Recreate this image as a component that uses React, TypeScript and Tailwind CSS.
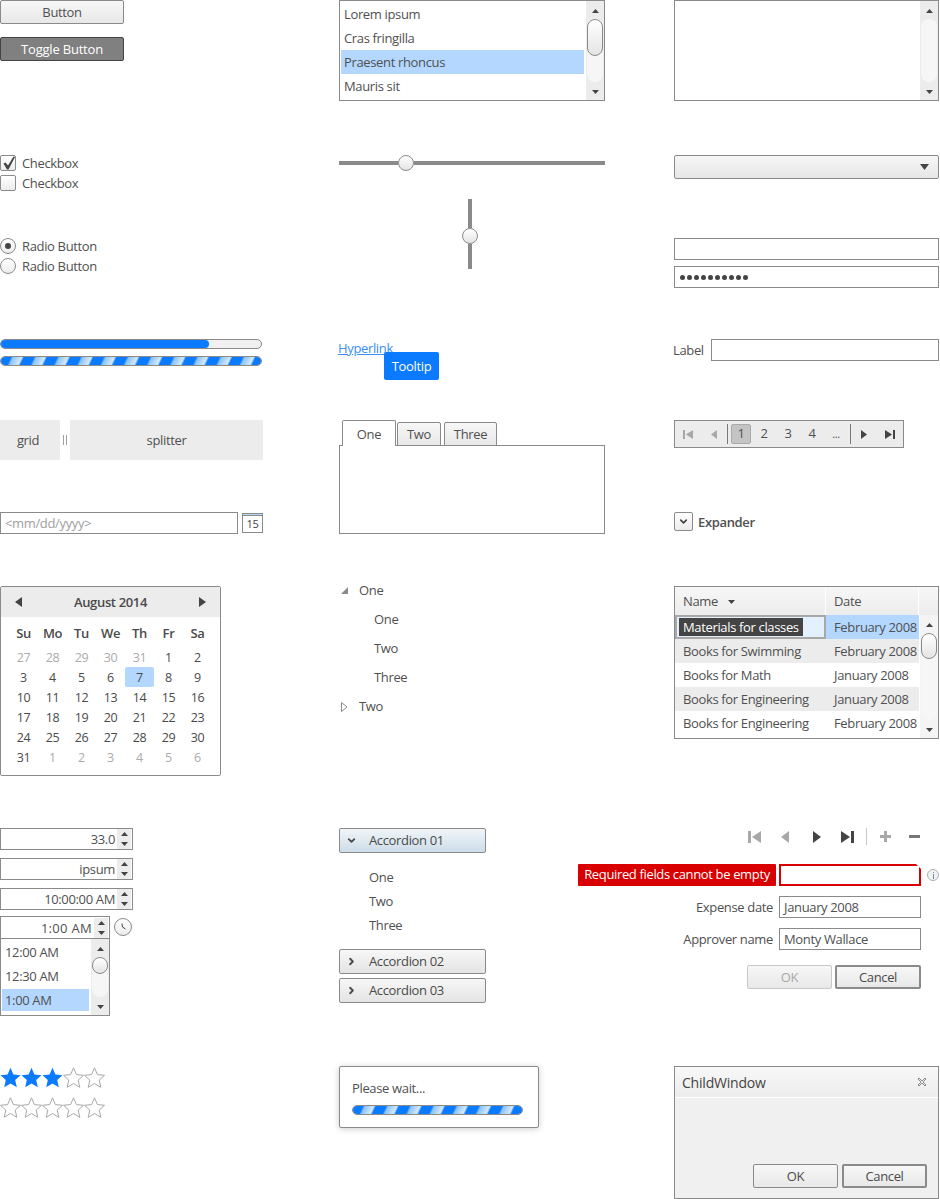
import { ChevronDown, ChevronRight } from "lucide-react";

const stripes =
  "bg-[repeating-linear-gradient(115deg,#0a7aff_0px,#0a7aff_9px,#8cc4fc_11px,#d5e9fd_19px,#0a7aff_21px)] bg-clip-padding";

function Tri({ dir, w = 8, h = 5, className = "fill-[#444]" }: { dir: "up" | "down" | "left" | "right"; w?: number; h?: number; className?: string }) {
  const pts = {
    up: `0,${h} ${w},${h} ${w / 2},0`,
    down: `0,0 ${w},0 ${w / 2},${h}`,
    left: `${w},0 ${w},${h} 0,${h / 2}`,
    right: `0,0 0,${h} ${w},${h / 2}`,
  }[dir];
  return (
    <svg width={w} height={h} viewBox={`0 0 ${w} ${h}`} className={`block shrink-0 ${className}`}>
      <polygon points={pts} />
    </svg>
  );
}

function Thumb({ className = "" }: { className?: string }) {
  return (
    <div className={`rounded-full border border-[#8a8a8a] bg-gradient-to-b from-white to-[#e4e4e4] ${className}`} />
  );
}

function ScrollBar({ thumb = "h-[37px]", className = "" }: { thumb?: string; className?: string }) {
  return (
    <div className={`flex w-[18px] shrink-0 flex-col items-center bg-[#ececec] ${className}`}>
      <div className="flex h-[18px] items-center justify-center pt-[2px]">
        <Tri dir="up" w={7} h={4} />
      </div>
      <div className="w-[16px] flex-1 rounded-[8px] bg-[#f6f6f6]">
        {thumb && <Thumb className={`w-[16px] rounded-[8px] ${thumb}`} />}
      </div>
      <div className="flex h-[18px] items-center justify-center pt-[2px]">
        <Tri dir="down" w={7} h={4} />
      </div>
    </div>
  );
}

function Btn({ label, className = "" }: { label: string; className?: string }) {
  return (
    <div className={`flex h-[24px] items-center justify-center rounded-[2px] border border-[#8a8a8a] bg-gradient-to-b from-[#f7f7f7] to-[#e8e8e8] pt-[2px] ${className}`}>
      {label}
    </div>
  );
}

function Check({ checked, className = "" }: { checked?: boolean; className?: string }) {
  return (
    <div className={`flex h-[20px] items-center gap-[6px] text-[#505050] ${className}`}>
      <div className="relative h-[16px] w-[16px] rounded-[2px] border border-[#8a8a8a] bg-gradient-to-b from-white to-[#ececec]">
        {checked && (
          <svg width="14" height="14" viewBox="0 0 14 14" className="absolute left-[1px] top-0 fill-[#444]">
            <path d="M1.5 7.5 L3.5 6.5 L6 9.5 L11.5 0.5 L13 1 L6.5 13.5 L5 13.5 Z" />
          </svg>
        )}
      </div>
      <span className="mt-[2px]">Checkbox</span>
    </div>
  );
}

function Radio({ checked, className = "" }: { checked?: boolean; className?: string }) {
  return (
    <div className={`flex h-[20px] items-center gap-[6px] text-[#505050] ${className}`}>
      <div className="flex h-[16px] w-[16px] items-center justify-center rounded-full border border-[#8a8a8a] bg-gradient-to-b from-white to-[#ececec]">
        {checked && <div className="h-[6px] w-[6px] rounded-full bg-[#444]" />}
      </div>
      <span className="mt-[2px]">Radio Button</span>
    </div>
  );
}

function Striped({ className = "" }: { className?: string }) {
  return <div className={`h-[10px] rounded-[5px] border border-[#8a8a8a] ${stripes} ${className}`} />;
}

function Spin() {
  return (
    <div className="mr-[1px] flex h-[20px] w-[14px] shrink-0 flex-col bg-[#ececec]">
      <div className="flex h-[10px] items-center justify-center"><Tri dir="up" w={7} h={4} /></div>
      <div className="flex h-[10px] items-center justify-center"><Tri dir="down" w={7} h={4} /></div>
    </div>
  );
}

function Numeric({ value, className = "" }: { value: string; className?: string }) {
  return (
    <div className={`flex h-[22px] w-[133px] items-center justify-end gap-[2px] border border-[#8a8a8a] text-[#505050] ${className}`}>
      <span className="mt-[2px]">{value}</span>
      <Spin />
    </div>
  );
}

function Star({ on }: { on?: boolean }) {
  return (
    <svg width="21" height="21" viewBox="0 0 21 21" className={on ? "fill-[#0a7aff]" : "fill-white stroke-[#a8a8a8]"}>
      <polygon points="10.5,0.8 13.4,7.6 20.5,8.3 15.2,13.1 16.8,20.3 10.5,16.5 4.2,20.3 5.8,13.1 0.5,8.3 7.6,7.6" />
    </svg>
  );
}

function Calendar() {
  const head = ["Su", "Mo", "Tu", "We", "Th", "Fr", "Sa"];
  const prev = ["27", "28", "29", "30", "31"];
  const days = Array.from({ length: 31 }, (_, i) => String(i + 1));
  const next = ["1", "2", "3", "4", "5", "6"];
  return (
    <div className="mt-[52px] h-[190px] w-[221px] rounded-[2px] border border-[#8a8a8a]">
      <div className="flex h-[30px] items-center justify-between bg-[#ececec] px-[14px] font-semibold text-[#4a4a4a]">
        <Tri dir="left" w={7} h={10} />
        <span className="mt-[2px]">August 2014</span>
        <Tri dir="right" w={7} h={10} />
      </div>
      <div className="grid grid-cols-[repeat(7,29px)] pl-[8px] pt-[7px]">
        {head.map((d) => (
          <div key={d} className="flex h-[20px] items-center justify-center font-semibold text-[#4a4a4a]">{d}</div>
        ))}
      </div>
      <div className="grid grid-cols-[repeat(7,29px)] grid-rows-[repeat(6,20px)] pl-[8px] pt-[3px] text-[12.5px]">
        {prev.map((d) => (
          <div key={"p" + d} className="flex items-center justify-center pt-[2px] text-[#ababab]">{d}</div>
        ))}
        {days.map((d) => (
          <div key={d} className={`flex items-center justify-center pt-[2px] text-[#4a4a4a] ${d === "7" ? "rounded-[2px] bg-[#b3d7ff]" : ""}`}>{d}</div>
        ))}
        {next.map((d) => (
          <div key={"n" + d} className="flex items-center justify-center pt-[2px] text-[#ababab]">{d}</div>
        ))}
      </div>
    </div>
  );
}

function ColumnOne() {
  return (
    <div className="w-[263px] shrink-0">
      <Btn label="Button" className="w-[124px] text-[#505050]" />
      <div className="mt-[13px] flex h-[24px] w-[124px] items-center justify-center rounded-[2px] border border-[#444] bg-[#808080] pt-[2px] tracking-[-0.2px] text-white">
        Toggle Button
      </div>
      <Check checked className="mt-[92px]" />
      <Check />
      <Radio checked className="mt-[43px]" />
      <Radio />
      <div className="mt-[63px] h-[10px] w-[262px] rounded-[5px] border border-[#8a8a8a] bg-[#f0f0f0]">
        <div className="h-full w-[208px] rounded-[5px] bg-[#0a7aff]" />
      </div>
      <Striped className="mt-[7px] w-[262px]" />
      <div className="mt-[54px] flex h-[40px] text-[#505050]">
        <div className="flex w-[60px] items-center justify-center bg-[#ececec] pr-[4px] pt-[2px]">grid</div>
        <div className="flex w-[10px] items-center justify-center gap-[2px]">
          <div className="h-[10px] w-px bg-[#a0a0a0]" />
          <div className="h-[10px] w-px bg-[#a0a0a0]" />
        </div>
        <div className="flex w-[193px] items-center justify-center bg-[#ececec] pt-[2px]">splitter</div>
      </div>
      <div className="mt-[52px] flex h-[22px] items-center">
        <div className="flex h-[22px] w-[238px] items-center border border-[#8a8a8a] pl-[4px] pt-[2px] text-[#a0a0a0]">&lt;mm/dd/yyyy&gt;</div>
        <div className="ml-[4px] flex h-[20px] w-[21px] flex-col border border-[#8a8a8a]">
          <div className="h-[4px] bg-[#b3d7ff]" />
          <div className="flex flex-1 items-center justify-center border-t border-[#8a8a8a] text-[11px] text-[#444]">15</div>
        </div>
      </div>
      <Calendar />
      <Numeric value="33.0" className="mt-[52px]" />
      <Numeric value="ipsum" className="mt-[8px]" />
      <Numeric value="10:00:00 AM" className="mt-[8px]" />
      <div className="relative mt-[6px] w-[110px]">
        <div className="flex h-[22px] items-center justify-end gap-[2px] border border-b-0 border-[#8a8a8a] text-[#505050]">
          <span className="mt-[2px] tracking-[0.3px]">1:00 AM</span>
          <Spin />
        </div>
        <div className="flex h-[78px] border border-[#8a8a8a] text-[#505050]">
          <div className="flex-1 pl-[1px] pt-[2px]">
            <div className="flex h-[24px] items-center pl-[3px]">12:00 AM</div>
            <div className="flex h-[24px] items-center pl-[3px]">12:30 AM</div>
            <div className="flex h-[22px] items-center bg-[#b3d7ff] pl-[3px] pt-[2px]">1:00 AM</div>
          </div>
          <ScrollBar thumb="h-[17px]" className="ml-[2px]" />
        </div>
        <div className="absolute left-[114px] top-[2px] flex h-[18px] w-[18px] items-center justify-center rounded-full border border-[#8a8a8a] bg-gradient-to-b from-white to-[#ececec]">
          <svg width="10" height="10" viewBox="0 0 10 10" className="fill-none stroke-[#444]">
            <path d="M4 1.5 L4.5 5 L7.5 7" />
          </svg>
        </div>
      </div>
      <div className="mt-[51px] flex">
        <Star on /><Star on /><Star on /><Star /><Star />
      </div>
      <div className="mt-[9px] flex">
        <Star /><Star /><Star /><Star /><Star />
      </div>
    </div>
  );
}

function AccordionHead({ label, open, className = "" }: { label: string; open?: boolean; className?: string }) {
  return (
    <div className={`flex h-[25px] w-[147px] items-center rounded-[2px] border border-[#8a8a8a] pl-[6px] text-[#4a4a4a] ${open ? "bg-gradient-to-b from-[#f0f5f9] to-[#cddde9]" : "bg-gradient-to-b from-[#f7f7f7] to-[#e4e4e4]"} ${className}`}>
      {open ? <ChevronDown size={11} strokeWidth={4} /> : <ChevronRight size={11} strokeWidth={4} />}
      <span className="ml-[12px]">{label}</span>
    </div>
  );
}

function ColumnTwo() {
  return (
    <div className="ml-[76px] w-[266px] shrink-0 text-[#505050]">
      <div className="flex h-[101px] border border-[#8a8a8a]">
        <div className="flex-1 pl-[1px] pt-[1px]">
          <div className="flex h-[24px] items-center pl-[3px] pt-[2px]">Lorem ipsum</div>
          <div className="flex h-[24px] items-center pl-[3px] pt-[2px]">Cras fringilla</div>
          <div className="flex h-[24px] items-center bg-[#b3d7ff] pl-[3px] pt-[2px]">Praesent rhoncus</div>
          <div className="flex h-[24px] items-center pl-[3px] pt-[2px]">Mauris sit</div>
        </div>
        <ScrollBar className="ml-[2px]" />
      </div>
      <div className="mt-[54px] flex h-[16px] items-center">
        <div className="h-[4px] w-[59px] bg-[#8a8a8a]" />
        <Thumb className="h-[16px] w-[16px]" />
        <div className="h-[4px] flex-1 bg-[#8a8a8a]" />
      </div>
      <div className="mt-[28px] flex h-[70px] flex-col items-center pr-[4px]">
        <div className="h-[29px] w-[4px] bg-[#8a8a8a]" />
        <Thumb className="h-[16px] w-[16px]" />
        <div className="w-[4px] flex-1 bg-[#8a8a8a]" />
      </div>
      <div className="relative mt-[70px] h-[20px] -ml-px">
        <span className="underline text-[#3b8df5]">Hyperlink</span>
        <div className="absolute left-[46px] top-[13px] flex h-[28px] w-[55px] items-center justify-center rounded-[2px] bg-[#0a7aff] pt-[2px] text-white">Tooltip</div>
      </div>
      <div className="mt-[61px] flex h-[26px] items-end pl-[3px]">
        <div className="relative z-10 flex h-[26px] w-[54px] items-center justify-center rounded-t-[2px] border border-b-0 border-[#8a8a8a] bg-white pt-[2px]">One</div>
        <div className="ml-[1px] flex h-[24px] w-[44px] items-center justify-center rounded-t-[2px] border border-[#8a8a8a] bg-gradient-to-b from-[#f7f7f7] to-[#e8e8e8] pt-[2px]">Two</div>
        <div className="ml-[3px] flex h-[24px] w-[53px] items-center justify-center rounded-t-[2px] border border-[#8a8a8a] bg-gradient-to-b from-[#f7f7f7] to-[#e8e8e8] pt-[2px]">Three</div>
      </div>
      <div className="-mt-px h-[89px] border border-[#8a8a8a]" />
      <div className="mt-[42px]">
        <div className="flex h-[29px] items-center pl-[2px]">
          <svg width="7" height="7" viewBox="0 0 7 7" className="fill-[#8a8a8a]"><polygon points="7,0 7,7 0,7" /></svg>
          <span className="ml-[11px]">One</span>
        </div>
        <div className="flex h-[29px] items-center pl-[35px]">One</div>
        <div className="flex h-[29px] items-center pl-[35px]">Two</div>
        <div className="flex h-[29px] items-center pl-[35px]">Three</div>
        <div className="flex h-[29px] items-center pl-[2px]">
          <svg width="7" height="10" viewBox="0 0 7 10" className="fill-white stroke-[#8a8a8a]"><polygon points="0.5,0.5 6,5 0.5,9.5" /></svg>
          <span className="ml-[11px]">Two</span>
        </div>
      </div>
      <AccordionHead label="Accordion 01" open className="mt-[107px]" />
      <div className="pl-[30px] pt-[13px]">
        <div className="flex h-[24px] items-center">One</div>
        <div className="flex h-[24px] items-center">Two</div>
        <div className="flex h-[24px] items-center">Three</div>
      </div>
      <AccordionHead label="Accordion 02" className="mt-[11px]" />
      <AccordionHead label="Accordion 03" className="mt-[4px]" />
      <div className="mt-[63px] h-[62px] w-[200px] rounded-[2px] border border-[#8a8a8a] bg-white px-[12px] pt-[12px] shadow-[0_1px_6px_rgba(0,0,0,0.2)]">
        <div className="flex h-[20px] items-center">Please wait...</div>
        <Striped className="mt-[6px] w-[171px]" />
      </div>
    </div>
  );
}

function Pager() {
  return (
    <div className="mt-[59px] flex h-[28px] w-[230px] items-center border border-[#8a8a8a] bg-[#ececec] text-[#505050]">
      <div className="flex w-[26px] items-center justify-center">
        <svg width="10" height="9" viewBox="0 0 10 9" className="fill-[#a8a8a8]"><rect width="2" height="9" /><polygon points="10,0 10,9 3,4.5" /></svg>
      </div>
      <div className="flex w-[26px] items-center justify-center"><Tri dir="left" w={6} h={9} className="fill-[#a8a8a8]" /></div>
      <div className="h-[20px] w-px bg-[#777]" />
      <div className="ml-[3px] flex h-[20px] w-[20px] items-center justify-center rounded-[2px] border border-[#aaa] bg-[#c4c4c4]">1</div>
      <div className="ml-[1px] flex w-[24px] items-center justify-center">2</div>
      <div className="flex w-[24px] items-center justify-center">3</div>
      <div className="flex w-[24px] items-center justify-center">4</div>
      <div className="flex w-[24px] items-center justify-center text-[11px]">...</div>
      <div className="ml-[2px] h-[20px] w-px bg-[#777]" />
      <div className="flex w-[26px] items-center justify-center"><Tri dir="right" w={6} h={9} /></div>
      <div className="flex w-[26px] items-center justify-center">
        <svg width="10" height="9" viewBox="0 0 10 9" className="fill-[#444]"><polygon points="0,0 0,9 7,4.5" /><rect x="8" width="2" height="9" /></svg>
      </div>
    </div>
  );
}

function DataGrid() {
  const rows = [
    ["Books for Swimming", "February 2008", "bg-[#ececec]"],
    ["Books for Math", "January 2008", "bg-white"],
    ["Books for Engineering", "January 2008", "bg-[#ececec]"],
    ["Books for Engineering", "February 2008", "bg-white"],
  ];
  return (
    <div className="mt-[55px] h-[153px] w-[265px] border border-[#8a8a8a]">
      <div className="flex h-[28px] bg-gradient-to-b from-[#f7f7f7] to-[#ececec]">
        <div className="flex w-[151px] items-center border-r border-white pl-[8px] pt-[2px]">
          Name
          <span className="ml-[10px]"><Tri dir="down" w={7} h={4} /></span>
        </div>
        <div className="flex w-[93px] items-center border-r border-white pl-[8px] pt-[2px]">Date</div>
      </div>
      <div className="flex h-[123px]">
        <div className="w-[244px]">
          <div className="flex h-[24px]">
            <div className="flex w-[151px] items-center border-2 border-[#a8a8a8] bg-[#e3f1ff] pl-[2px]">
              <span className="bg-[#444] px-[4px] pt-[1px] leading-[17px] text-white">Materials for classes</span>
            </div>
            <div className="flex flex-1 items-center bg-[#b3d7ff] pl-[8px] pt-[2px]">February 2008</div>
          </div>
          {rows.map(([name, date, bg], i) => (
            <div key={i} className={`flex h-[24px] items-center pt-[2px] ${bg}`}>
              <div className="w-[151px] pl-[8px]">{name}</div>
              <div className="pl-[8px]">{date}</div>
            </div>
          ))}
        </div>
        <ScrollBar thumb="h-[26px]" className="ml-[1px] bg-[#f4f4f4]" />
      </div>
    </div>
  );
}

function Toolbar() {
  return (
    <div className="flex h-[17px] items-center">
      <svg width="13" height="12" viewBox="0 0 13 12" className="ml-[170px] fill-[#a8a8a8]"><rect width="3" height="12" /><polygon points="13,0 13,12 4,6" /></svg>
      <span className="ml-[20px]"><Tri dir="left" w={8} h={12} className="fill-[#a8a8a8]" /></span>
      <span className="ml-[24px]"><Tri dir="right" w={8} h={12} /></span>
      <svg width="13" height="12" viewBox="0 0 13 12" className="ml-[20px] fill-[#444]"><polygon points="0,0 0,12 9,6" /><rect x="10" width="3" height="12" /></svg>
      <div className="ml-[12px] h-[17px] w-px bg-[#c8c8c8]" />
      <svg width="11" height="11" viewBox="0 0 11 11" className="ml-[13px] fill-[#a8a8a8]"><rect y="4" width="11" height="3" /><rect x="4" width="3" height="11" /></svg>
      <div className="ml-[18px] h-[3px] w-[11px] bg-[#777]" />
    </div>
  );
}

function Validation() {
  return (
    <div className="mt-[89px] -ml-[96px] w-[361px]">
      <Toolbar />
      <div className="mt-[19px] flex h-[22px] items-center">
        <div className="flex h-[22px] w-[198px] items-center justify-center rounded-[1px] bg-[#d80000] text-white">Required fields cannot be empty</div>
        <div className="relative ml-[3px] h-[22px] w-[142px] border-2 border-[#d80000]">
          <div className="absolute -right-[2px] -top-[2px] h-0 w-0 border-l-[5px] border-t-[5px] border-l-transparent border-t-white" />
        </div>
        <div className="ml-[6px] flex h-[12px] w-[12px] flex-col items-center justify-center gap-px rounded-full border border-[#b0b0b0] bg-[#eef2f6]">
          <div className="h-px w-px bg-[#7a8a9a]" />
          <div className="h-[5px] w-px bg-[#7a8a9a]" />
        </div>
      </div>
      <div className="mt-[10px] flex h-[22px] items-center justify-end pr-[18px]">
        <span className="mt-[2px]">Expense date</span>
        <div className="ml-[6px] flex h-[22px] w-[142px] items-center border border-[#8a8a8a] pl-[4px] pt-[2px]">January 2008</div>
      </div>
      <div className="mt-[10px] flex h-[22px] items-center justify-end pr-[18px]">
        <span className="mt-[2px]">Approver name</span>
        <div className="ml-[6px] flex h-[22px] w-[142px] items-center border border-[#8a8a8a] pl-[4px] pt-[2px]">Monty Wallace</div>
      </div>
      <div className="mt-[15px] flex justify-end pr-[18px]">
        <Btn label="OK" className="w-[85px] border-[#c8c8c8] text-[#a8a8a8]" />
        <Btn label="Cancel" className="ml-[3px] w-[86px] border-2 border-[#7a7a7a] text-[#4a4a4a]" />
      </div>
    </div>
  );
}

function ChildWindow() {
  return (
    <div className="mt-[77px] flex h-[133px] w-[265px] flex-col border border-[#8a8a8a] bg-[#f0f0f0]">
      <div className="flex h-[30px] items-center justify-between bg-gradient-to-b from-[#f8f8f8] to-[#ececec] pl-[7px] pr-[11px] text-[14px] tracking-[-0.2px] text-[#444]">
        ChildWindow
        <svg width="10" height="10" viewBox="0 0 10 10" className="fill-none stroke-[#8a8a8a]">
          <path d="M1 2 L2 1 L5 4 L8 1 L9 2 L6 5 L9 8 L8 9 L5 6 L2 9 L1 8 L4 5 Z" />
        </svg>
      </div>
      <div className="h-px bg-white" />
      <div className="mt-auto flex justify-end pb-[10px] pr-[11px]">
        <Btn label="OK" className="w-[85px] text-[#4a4a4a]" />
        <Btn label="Cancel" className="ml-[4px] w-[85px] border-2 border-[#7a7a7a] text-[#4a4a4a]" />
      </div>
    </div>
  );
}

function ColumnThree() {
  return (
    <div className="ml-[69px] w-[265px] shrink-0 text-[#505050]">
      <div className="flex h-[101px] border border-[#8a8a8a]">
        <div className="flex-1" />
        <ScrollBar thumb="" />
      </div>
      <div className="mt-[54px] flex h-[24px] items-center justify-end rounded-[2px] border border-[#8a8a8a] bg-gradient-to-b from-[#f7f7f7] to-[#e6e6e6] pr-[9px]">
        <Tri dir="down" w={9} h={6} />
      </div>
      <div className="mt-[59px] h-[22px] border border-[#8a8a8a]" />
      <div className="mt-[6px] flex h-[22px] items-center gap-[2px] border border-[#8a8a8a] pl-[5px]">
        {Array.from({ length: 10 }, (_, i) => (
          <div key={i} className="h-[5px] w-[5px] rounded-full bg-[#444]" />
        ))}
      </div>
      <div className="mt-[51px] flex h-[22px] items-center justify-between">
        <span className="-ml-px mt-[2px]">Label</span>
        <div className="h-[22px] w-[228px] border border-[#8a8a8a]" />
      </div>
      <Pager />
      <div className="mt-[64px] flex h-[19px] items-center font-semibold">
        <div className="mr-[5px] flex h-[19px] w-[19px] items-center justify-center rounded-[2px] border border-[#8a8a8a] bg-gradient-to-b from-white to-[#ececec] text-[#444]">
          <ChevronDown size={11} strokeWidth={3.5} />
        </div>
        <span className="mt-[2px]">Expander</span>
      </div>
      <DataGrid />
      <Validation />
      <ChildWindow />
    </div>
  );
}

export default function App() {
  return (
    <div className="flex h-[1199px] w-[940px] items-start overflow-hidden bg-white font-['Open_Sans',sans-serif] text-[13px] tracking-[-0.35px]">
      <ColumnOne />
      <ColumnTwo />
      <ColumnThree />
    </div>
  );
}
